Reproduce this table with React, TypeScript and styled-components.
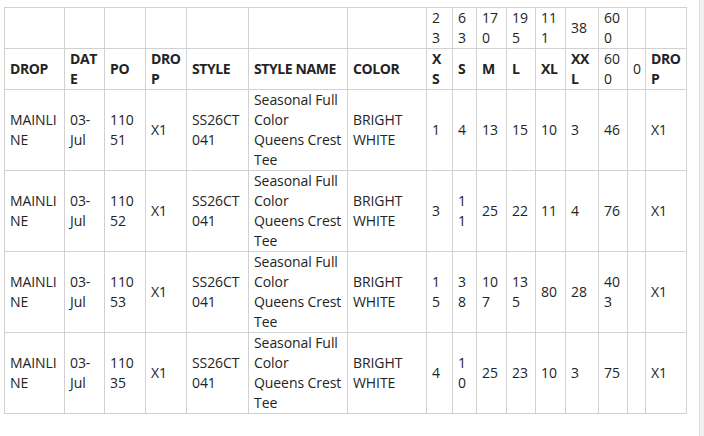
import React from "react";
import styled, { createGlobalStyle } from "styled-components";

const GlobalStyle = createGlobalStyle`
  *, *::before, *::after { box-sizing: border-box; }
  html, body { margin: 0; padding: 0; background: #ffffff; }
  body {
    font-family: "Open Sans", "Noto Sans", "Liberation Sans", sans-serif;
    color: #242424;
  }
`;

const Page = styled.div`
  display: flex;
  width: 704px;
  height: 436px;
  overflow: hidden;
`;

const Content = styled.main`
  flex: 1;
  padding: 7px 0 0 4px;
`;

const ScrollTrack = styled.div`
  width: 5px;
  flex: none;
  background: #f1f1f1;
  border-left: 1px solid #dedede;
`;

const Table = styled.table`
  border-collapse: separate;
  border-spacing: 0;
  table-layout: fixed;
  width: 683px;
  border-top: 1px solid #d1d1d1;
  border-left: 1px solid #d1d1d1;
`;

const Cell = styled.td<{ $bold?: boolean }>`
  border-right: 1px solid #d1d1d1;
  border-bottom: 1px solid #d1d1d1;
  padding: 0 5px;
  font-size: 14px;
  line-height: 20px;
  font-weight: ${(p) => (p.$bold ? 700 : 400)};
  letter-spacing: ${(p) => (p.$bold ? "-0.4px" : "-0.08px")};
  text-align: left;
  vertical-align: middle;
  overflow-wrap: break-word;
  word-break: normal;
  color: #242424;
`;

const colWidths = [60, 40, 41, 41, 62, 99, 79, 26, 24, 30, 29, 30, 33, 29, 18, 41];

const totals = ["", "", "", "", "", "", "", "23", "63", "170", "195", "111", "38", "600", "", ""];

const headers: { text: string; bold: boolean }[] = [
  { text: "DROP", bold: true },
  { text: "DATE", bold: true },
  { text: "PO", bold: true },
  { text: "DROP", bold: true },
  { text: "STYLE", bold: true },
  { text: "STYLE NAME", bold: true },
  { text: "COLOR", bold: true },
  { text: "XS", bold: true },
  { text: "S", bold: true },
  { text: "M", bold: true },
  { text: "L", bold: true },
  { text: "XL", bold: true },
  { text: "XXL", bold: true },
  { text: "600", bold: false },
  { text: "0", bold: false },
  { text: "DROP", bold: true },
];

const base = ["MAINLINE", "03-Jul"];
const style = ["X1", "SS26CT041", "Seasonal Full Color Queens Crest Tee", "BRIGHT WHITE"];

const rows: { po: string; sizes: string[] }[] = [
  { po: "11051", sizes: ["1", "4", "13", "15", "10", "3", "46"] },
  { po: "11052", sizes: ["3", "11", "25", "22", "11", "4", "76"] },
  { po: "11053", sizes: ["15", "38", "107", "135", "80", "28", "403"] },
  { po: "11035", sizes: ["4", "10", "25", "23", "10", "3", "75"] },
];

export default function App() {
  return (
    <>
      <GlobalStyle />
      <Page>
        <Content>
          <Table>
            <colgroup>
              {colWidths.map((w, i) => (
                <col key={i} style={{ width: w }} />
              ))}
            </colgroup>
            <thead>
              <tr>
                {totals.map((t, i) => (
                  <Cell key={i}>{t}</Cell>
                ))}
              </tr>
              <tr>
                {headers.map((h, i) => (
                  <Cell as="th" key={i} $bold={h.bold}>
                    {h.text}
                  </Cell>
                ))}
              </tr>
            </thead>
            <tbody>
              {rows.map((r) => (
                <tr key={r.po}>
                  {[...base, r.po, ...style, ...r.sizes, "", "X1"].map((v, i) => (
                    <Cell key={i}>{v}</Cell>
                  ))}
                </tr>
              ))}
            </tbody>
          </Table>
        </Content>
        <ScrollTrack />
      </Page>
    </>
  );
}
